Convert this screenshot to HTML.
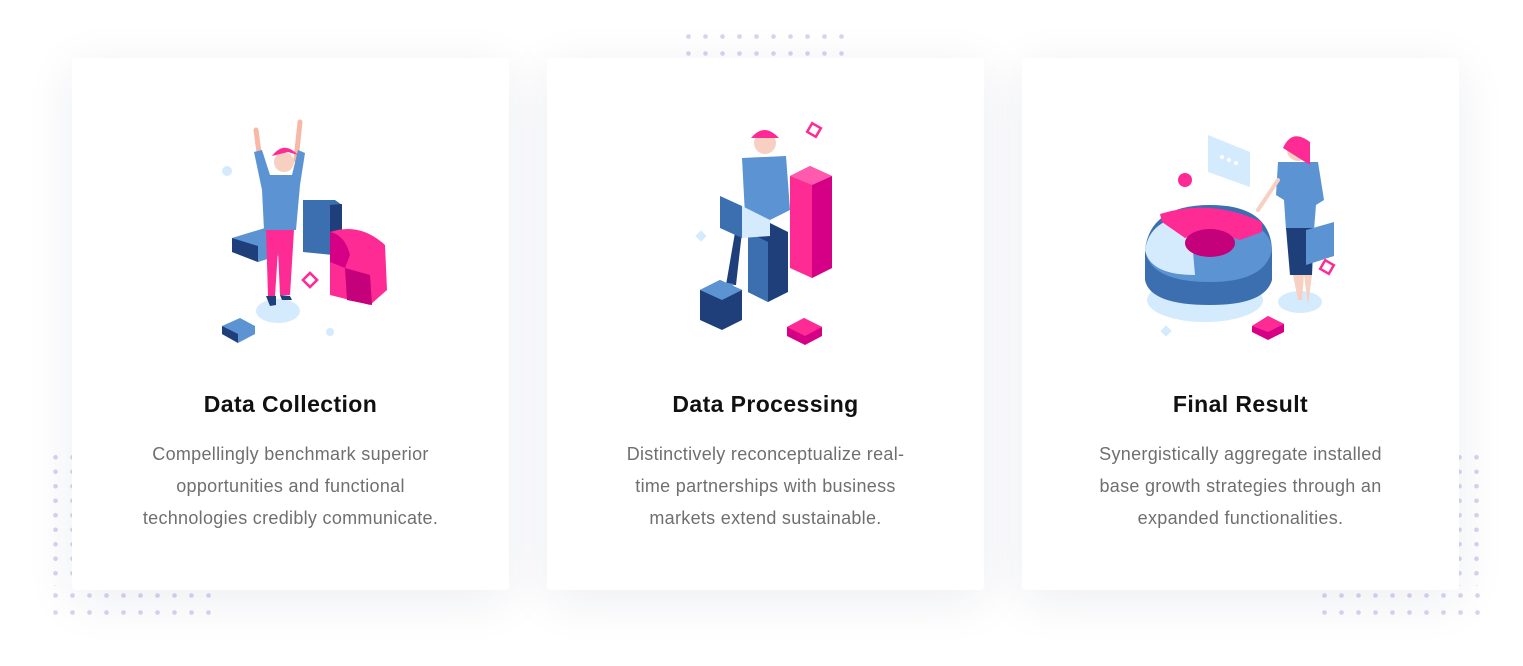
<!DOCTYPE html>
<html><head><meta charset="utf-8"><style>
html,body{margin:0;padding:0;background:#fff;width:1523px;height:666px;overflow:hidden;position:relative;font-family:"Liberation Sans",sans-serif}
.card{position:absolute;top:58px;width:437px;height:532px;background:#fff;border-radius:4px;box-shadow:0 10px 50px rgba(30,40,90,0.08);text-align:center}
.card h3{position:absolute;top:332px;left:0;right:0;margin:0;font-size:23px;line-height:28px;font-weight:600;color:#111;letter-spacing:0.4px}
.card p{position:absolute;top:380px;left:0;right:0;margin:0;font-size:18px;line-height:32px;color:#6f6f6f;white-space:nowrap;letter-spacing:0.3px}
.dots{position:absolute;background-image:radial-gradient(circle,#d9d3f2 2px,transparent 2.6px);background-size:17px 17px}
svg{position:absolute;left:0;top:0}
</style></head><body>
<div class="dots" style="left:680px;top:28px;width:170px;height:34px"></div>
<div class="dots" style="left:47px;top:450px;width:34px;height:136px;background-size:17px 14.5px"></div>
<div class="dots" style="left:47px;top:587px;width:170px;height:34px"></div>
<div class="dots" style="left:1451px;top:450px;width:34px;height:136px;background-size:17px 14.5px"></div>
<div class="dots" style="left:1316px;top:587px;width:170px;height:34px"></div>

<div class="card" style="left:72px"><h3>Data Collection</h3><p>Compellingly benchmark superior<br>opportunities and functional<br>technologies credibly communicate.</p></div>
<div class="card" style="left:547px"><h3>Data Processing</h3><p>Distinctively reconceptualize real-<br>time partnerships with business<br>markets extend sustainable.</p></div>
<div class="card" style="left:1022px"><h3>Final Result</h3><p>Synergistically aggregate installed<br>base growth strategies through an<br>expanded functionalities.</p></div>

<svg width="1523" height="666" viewBox="0 0 1523 666">
<!-- card 1 -->
<ellipse cx="278" cy="311" rx="22" ry="12" fill="#d4eafd"/>
<path d="M232 238 L265 228 L290 236 L290 252 L258 262 L232 252Z" fill="#5b93d3"/>
<path d="M232 238 L258 246 L258 262 L232 252Z" fill="#1e3f7a"/>
<path d="M303 200 L335 200 L342 205 L342 248 L333 255 L303 252Z" fill="#3b6fb0"/>
<path d="M330 205 L342 204 L342 248 L330 254Z" fill="#1e3f7a"/>
<path d="M330 232 Q360 222 385 245 L387 290 L370 305 L330 295 Z" fill="#ff2b95"/>
<path d="M345 268 L370 275 L372 305 L347 300Z" fill="#c4007a"/>
<path d="M330 232 Q345 235 350 255 L345 268 L330 262Z" fill="#d60087"/>
<path d="M222 326 L240 318 L255 326 L255 334 L238 343 L222 334Z" fill="#5b93d3"/>
<path d="M222 326 L238 334 L238 343 L222 334Z" fill="#1e3f7a"/>
<rect x="305" y="275" width="10" height="10" fill="none" stroke="#ff2b95" stroke-width="2.5" transform="rotate(45 310 280)"/>
<circle cx="227" cy="171" r="5" fill="#d4eafd"/><circle cx="330" cy="332" r="4" fill="#d4eafd"/>
<path d="M256 130 L260 160 M300 122 L296 160" stroke="#f7b9a5" stroke-width="5" stroke-linecap="round"/>
<path d="M254 152 L262 150 L270 175 L292 175 L298 150 L305 153 L300 185 L296 230 L264 230 L262 190Z" fill="#5b93d3"/>
<circle cx="284" cy="162" r="10" fill="#f7d0c2"/>
<path d="M272 156 Q284 140 298 155 L288 152 Z" fill="#ff2b95"/>
<path d="M266 230 L294 230 L290 295 L280 295 L278 250 L275 296 L268 296Z" fill="#ff2b95"/>
<path d="M266 296 L276 296 L276 305 L270 306Z M280 295 L290 296 L292 300 L282 300Z" fill="#1e3f7a"/>
<!-- card 2 -->
<path d="M790 176 L810 166 L832 176 L832 268 L812 278 L790 268Z" fill="#ff2b95"/>
<path d="M812 185 L832 176 L832 268 L812 278Z" fill="#d60087"/>
<path d="M790 176 L810 166 L832 176 L812 185Z" fill="#ff5aae"/>
<path d="M700 290 L720 280 L742 290 L742 320 L722 330 L700 320Z" fill="#1e3f7a"/>
<path d="M700 290 L720 280 L742 290 L722 300Z" fill="#5b93d3"/>
<path d="M748 232 L768 222 L788 232 L788 292 L768 302 L748 292Z" fill="#1e3f7a"/>
<path d="M748 232 L768 242 L768 302 L748 292Z" fill="#3b6fb0"/>
<path d="M787 327 L804 318 L822 327 L822 336 L805 345 L787 336Z" fill="#d60087"/>
<path d="M787 327 L804 318 L822 327 L805 336Z" fill="#ff2b95"/>
<rect x="809" y="125" width="10" height="10" fill="none" stroke="#ff2b95" stroke-width="2.5" transform="rotate(30 814 130)"/>
<rect x="697" y="232" width="8" height="8" fill="#d4eafd" transform="rotate(45 701 236)"/>
<path d="M742 158 L786 156 L790 210 L770 220 L745 215Z" fill="#5b93d3"/>
<circle cx="765" cy="143" r="11" fill="#f7d0c2"/>
<path d="M751 138 Q764 122 779 138 Z" fill="#ff2b95"/>
<path d="M738 215 L768 222 L756 232 L742 232 L736 285 L726 285Z" fill="#1e3f7a"/>
<path d="M720 196 L742 206 L742 238 L720 228Z" fill="#3b6fb0"/>
<path d="M742 206 L770 220 L770 236 L742 238Z" fill="#d4eafd"/>
<path d="M722 282 L734 284 L730 292 L720 290Z" fill="#5b93d3"/>
<!-- card 3 -->
<ellipse cx="1205" cy="300" rx="58" ry="22" fill="#d4eafd"/>
<path d="M1145 250 Q1150 205 1210 205 Q1270 205 1272 250 L1272 280 Q1265 305 1210 305 Q1150 305 1145 280Z" fill="#3b6fb0"/>
<path d="M1145 250 Q1150 218 1210 218 Q1270 218 1272 250 Q1265 282 1210 282 Q1150 282 1145 250Z" fill="#5b93d3"/>
<path d="M1145 250 Q1150 218 1190 216 L1195 275 Q1150 275 1145 250Z" fill="#d4eafd"/>
<path d="M1160 214 Q1210 198 1262 222 L1262 232 L1240 240 Q1210 228 1185 238 L1162 222Z" fill="#ff2b95"/>
<ellipse cx="1210" cy="243" rx="25" ry="14" fill="#c4007a"/>
<path d="M1208 135 L1250 152 L1250 187 L1208 172Z" fill="#d4eafd"/>
<circle cx="1222" cy="157" r="2" fill="#fff"/><circle cx="1229" cy="160" r="2" fill="#fff"/><circle cx="1236" cy="163" r="2" fill="#fff"/>
<circle cx="1185" cy="180" r="7" fill="#ff2b95"/>
<ellipse cx="1300" cy="302" rx="22" ry="11" fill="#d4eafd"/>
<path d="M1252 326 L1268 316 L1284 324 L1284 332 L1268 340 L1252 332Z" fill="#d60087"/>
<path d="M1252 326 L1268 316 L1284 324 L1268 332Z" fill="#ff2b95"/>
<rect x="1322" y="262" width="10" height="10" fill="none" stroke="#ff2b95" stroke-width="2.5" transform="rotate(30 1327 267)"/>
<rect x="1162" y="327" width="8" height="8" fill="#d4eafd" transform="rotate(45 1166 331)"/>
<path d="M1278 162 L1318 162 L1324 200 L1316 205 L1314 230 L1286 230 L1284 200 L1276 195Z" fill="#5b93d3"/>
<circle cx="1298" cy="150" r="11" fill="#f7d0c2"/>
<path d="M1283 148 Q1292 128 1310 142 L1310 165 L1302 160 Z" fill="#ff2b95"/>
<path d="M1286 228 L1314 228 L1312 275 L1290 275Z" fill="#1e3f7a"/>
<path d="M1293 275 L1298 300 L1302 300 L1304 275 L1308 305 L1312 275Z" fill="#f7d0c2"/>
<path d="M1306 230 L1334 222 L1334 256 L1306 265Z" fill="#5b93d3"/>
<path d="M1278 180 L1258 210" stroke="#f7d0c2" stroke-width="4" stroke-linecap="round"/>
</svg>
</body></html>
